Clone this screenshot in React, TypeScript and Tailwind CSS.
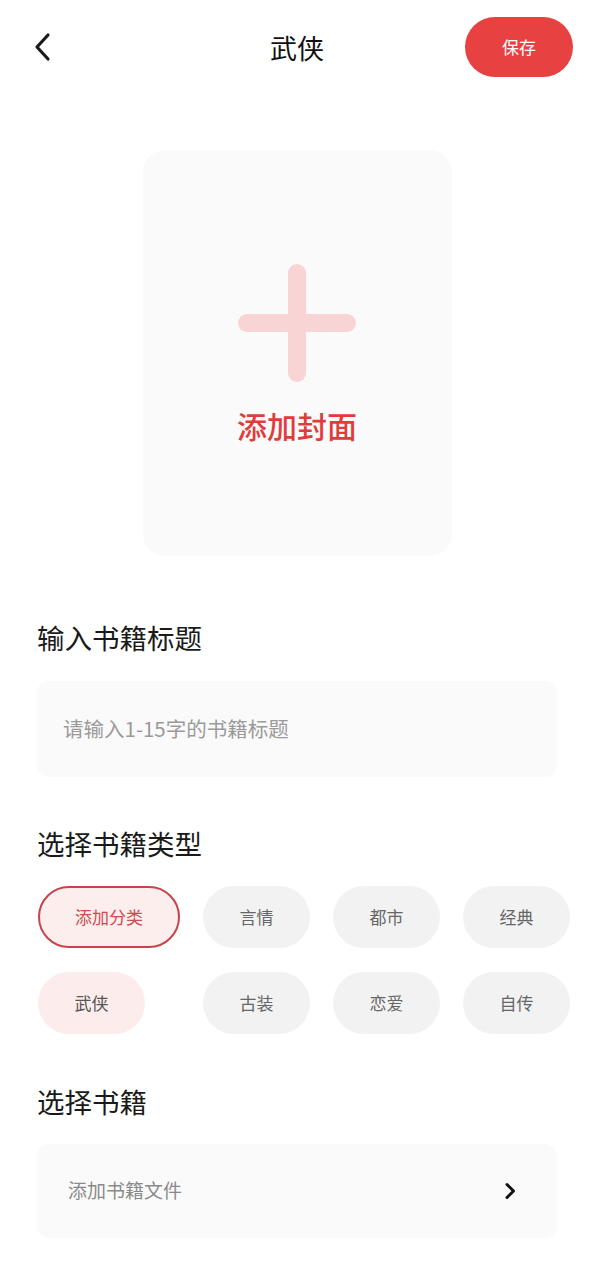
import { useState } from 'react';

const font = { fontFamily: '"Noto Sans CJK SC", "Noto Sans", sans-serif' };

const categories = ['添加分类', '言情', '都市', '经典', '武侠', '古装', '恋爱', '自传'];

function BackIcon() {
  return (
    <svg width="20" height="30" viewBox="0 0 20 30" fill="none">
      <path d="M15 3 L4 15 L15 27" stroke="#1a1a1a" strokeWidth="3.2" strokeLinecap="round" strokeLinejoin="round" />
    </svg>
  );
}

function PlusIcon() {
  return (
    <svg width="118" height="118" viewBox="0 0 118 118">
      <rect x="50" y="0" width="18" height="118" rx="9" fill="#f8d4d4" />
      <rect x="0" y="50" width="118" height="18" rx="9" fill="#f8d4d4" />
    </svg>
  );
}

function ChevronRight() {
  return (
    <svg width="12" height="18" viewBox="0 0 12 18" fill="none">
      <path d="M3 2.5 L9.5 9 L3 15.5" stroke="#111" strokeWidth="3" strokeLinecap="round" strokeLinejoin="round" />
    </svg>
  );
}

export default function App() {
  const [title, setTitle] = useState('');
  const [active] = useState('武侠');

  return (
    <div className="min-h-[1280px] w-[594px] bg-white" style={font}>
      {/* 顶部栏：返回 + 标题 + 保存 */}
      <div className="grid grid-cols-[1fr_auto_1fr] items-center pt-[17px] px-[21px]">
        <button type="button" className="justify-self-start ml-[12px] flex items-center" aria-label="返回">
          <BackIcon />
        </button>
        <h1 className="text-[27px] leading-none text-[#111]">{active}</h1>
        <button
          type="button"
          className="justify-self-end w-[108px] h-[60px] rounded-full bg-[#e84142] text-white text-[17px]"
        >
          保存
        </button>
      </div>

      {/* 封面 */}
      <div className="mt-[73px] mx-auto w-[309px] h-[406px] rounded-[22px] bg-[#fafafa] flex flex-col items-center pt-[114px]">
        <PlusIcon />
        <span className="mt-[28px] text-[30px] leading-none font-medium text-[#e13c3c]">添加封面</span>
      </div>

      <div className="px-[37px]">
        <h2 className="mt-[68px] text-[27.5px] leading-none text-[#1a1a1a]">输入书籍标题</h2>
        <div className="mt-[29px] h-[96px] rounded-[12px] bg-[#fafafa] flex items-center px-[26px]">
          <input
            value={title}
            onChange={(e) => setTitle(e.target.value)}
            placeholder="请输入1-15字的书籍标题"
            className="w-full bg-transparent outline-none text-[20.5px] text-[#333] placeholder:text-[#9a9a9a]"
            style={font}
          />
        </div>

        <h2 className="mt-[53px] text-[27.5px] leading-none text-[#1a1a1a]">选择书籍类型</h2>
        <div className="mt-[29px] ml-[1px] -mr-[20px] grid grid-cols-[142px_107px_107px_107px] gap-x-[23px] gap-y-[24px] justify-items-start">
          {categories.map((c, i) => {
            if (i === 0) {
              return (
                <button
                  key={c}
                  type="button"
                  className="w-[142px] h-[62px] rounded-full border-2 border-[#c8434b] bg-[#fdeeee] text-[17px] text-[#d04a50]"
                >
                  {c}
                </button>
              );
            }
            const on = c === active;
            return (
              <button
                key={c}
                type="button"
                className={
                  on
                    ? 'w-[107px] h-[62px] rounded-full bg-[#fdecec] text-[17px] text-[#555]'
                    : 'w-[107px] h-[62px] rounded-full bg-[#f2f2f2] text-[17px] text-[#666]'
                }
              >
                {c}
              </button>
            );
          })}
        </div>

        <h2 className="mt-[54px] text-[27.5px] leading-none text-[#1a1a1a]">选择书籍</h2>
        <button
          type="button"
          className="mt-[28px] w-full h-[94px] rounded-[12px] bg-[#fafafa] flex items-center justify-between pl-[31px] pr-[41px]"
        >
          <span className="text-[19px] text-[#8a8a8a]">添加书籍文件</span>
          <ChevronRight />
        </button>
      </div>
    </div>
  );
}
